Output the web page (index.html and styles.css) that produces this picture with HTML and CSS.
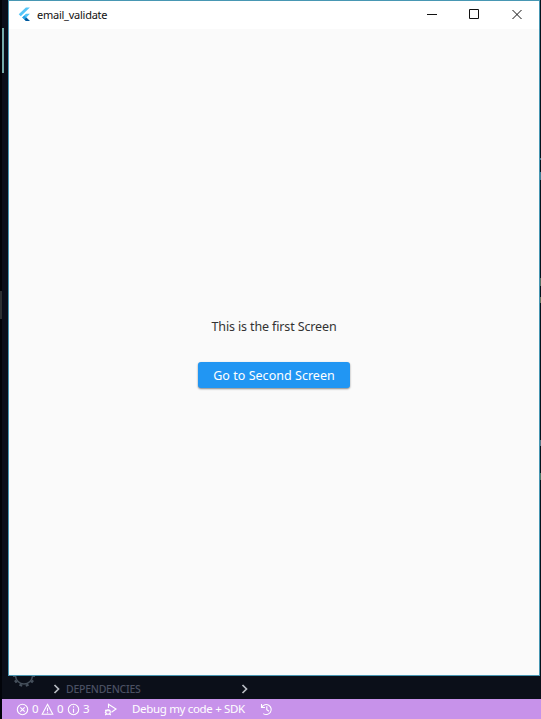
FILE: index.html
```html
<!DOCTYPE html>
<html lang="en">
<head>
<meta charset="utf-8">
<title>email_validate</title>
<link rel="stylesheet" href="styles.css">
</head>
<body>
<div class="desktop">
  <div class="workspace">
    <div class="gutter"><i class="active-mark"></i><i class="scroll-mark"></i></div>
    <main class="window">
      <header class="titlebar">
        <svg class="logo" width="14" height="16" viewBox="0 0 14 16">
          <path d="M8.500 .5h4.300L3 10 .8 7.800z" fill="#54c5f8"/>
          <path d="M8.500 7.200h4.300L8.900 11.100l3.900 4H8.500l-4-4z" fill="#54c5f8"/>
          <path d="M6.700 13.200l2.200-2.100 3.900 4H8.500z" fill="#01579b"/>
          <path d="M4.500 11.100l2.200-2.100 2.200 2.100-2.200 2.100z" fill="#29a3e8"/>
        </svg>
        <span class="title">email_validate</span>
        <div class="controls">
          <svg width="12" height="12" viewBox="0 0 12 12"><path d="M2 5.500h10"/></svg>
          <svg width="12" height="12" viewBox="0 0 12 12"><path d="M1.500 .5h9v9h-9z"/></svg>
          <svg width="12" height="12" viewBox="0 0 12 12"><path d="M1.500 1l9 9m0-9l-9 9"/></svg>
        </div>
      </header>
      <section class="screen">
        <p class="message">This is the first Screen</p>
        <button class="go">Go to Second Screen</button>
      </section>
    </main>
    <div class="edge"></div>
  </div>
  <div class="panel">
    <svg class="gear" width="26" height="24" viewBox="0 0 26 24"><circle cx="13" cy="11.500" r="8.500"/><path class="teeth" d="M15.800 20.100l.7 2.100M20.200 16.700l1.900 1.400M21.500 11.500h2.500M10.200 20.100l-.7 2.100M5.800 16.700l-1.900 1.400M4.500 11.500H2"/></svg>
    <svg class="chevron first" width="8" height="10" viewBox="0 0 8 10"><path d="M1.500 1l4 4-4 4"/></svg>
    <span class="deps">DEPENDENCIES</span>
    <svg class="chevron second" width="8" height="10" viewBox="0 0 8 10"><path d="M1.500 1l4 4-4 4"/></svg>
  </div>
  <footer class="status">
    <svg class="i-error" width="13" height="13" viewBox="0 0 13 13"><circle cx="6.500" cy="6.500" r="5.200"/><path d="M4.300 4.300l4.400 4.400m0-4.400L4.300 8.700"/></svg>
    <span class="n-error">0</span>
    <svg class="i-warn" width="13" height="13" viewBox="0 0 13 13"><path d="M6.500 1.300l5.300 10H1.200zM6.500 4.800v3.500m0 .9v1"/></svg>
    <span class="n-warn">0</span>
    <svg class="i-info" width="13" height="13" viewBox="0 0 13 13"><circle cx="6.500" cy="6.500" r="5.200"/><path d="M6.500 3.300v1.200m0 1.200v4"/></svg>
    <span class="n-info">3</span>
    <svg class="i-debug" width="13" height="13" viewBox="0 0 13 13"><path d="M4.500 5V1.200L12 6 7.500 9.200"/><circle cx="4" cy="9" r="2.300"/><path d="M2 7.800h4M1.200 7l1 .8M.8 9.500h1M1.200 12l1.300-1.200M6.800 12l-1.300-1.200"/></svg>
    <span class="debug">Debug my code + SDK</span>
    <svg class="i-history" width="13" height="13" viewBox="0 0 13 13"><path d="M1.800 4.200A5 5 0 1 1 3.300 10.600M1.500 1v3.500H5M6.800 3.300v3.400l2.200 1.500"/></svg>
  </footer>
</div>
</body>
</html>
```
FILE: styles.css
```css
* { box-sizing: border-box; }
body { margin: 0; background: #02050b; font-family: "Noto Sans", "Open Sans", sans-serif; }
svg { display: block; flex: none; fill: none; }
.desktop { width: 541px; height: 719px; display: grid; grid-template-rows: 676px 23px 20px; overflow: hidden; }
.workspace { display: grid; grid-template-columns: 8px 532px 1px; }
.gutter { background: linear-gradient(90deg, #010307 2px, #0a0e19 2px); padding-top: 28px; }
.gutter i { display: block; }
.active-mark { width: 2px; height: 45px; margin-left: 2px; background: #75aaa9; }
.scroll-mark { width: 2px; height: 28px; margin-top: 218px; background: #2c3032; }
.window { display: grid; grid-template-rows: 28px 1fr; background: #fafafa; border: 1px solid #4797b3; }
.titlebar { display: flex; align-items: center; background: #fff; padding-left: 9px; }
.logo { width: 13px; height: 15px; margin-top: -1px; }
.title { margin-left: 6px; width: 71px; font-size: 11px; line-height: 16px; letter-spacing: -.25px; color: #111; white-space: nowrap; }
.controls { margin-left: auto; display: flex; gap: 31px; padding-right: 16px; }
.controls svg { stroke: #111; stroke-width: 1; }
.screen { display: flex; flex-direction: column; align-items: center; padding-top: 289px; }
.message { margin: 0; font-size: 12.500px; line-height: 18px; letter-spacing: -.13px; color: #333; white-space: nowrap; }
.go { width: 152px; height: 26px; margin-top: 26px; padding: 1px 0 0; border: 0; border-radius: 3px; background: #2196f3; color: #fff; font: 400 12.500px/25px "Noto Sans", sans-serif; letter-spacing: .03px; white-space: nowrap; box-shadow: 0 1px 2px #0007; }
.edge { background: linear-gradient(#03121c 158px, #417b8d 158px, #417b8d 160px, #03121c 160px, #03121c 172px, #3c7c94 172px, #3c7c94 180px, #03121c 180px, #03121c 278px, #536d60 278px, #536d60 286px, #03121c 286px, #03121c 297px, #65745d 297px, #65745d 303px, #03121c 303px, #03121c 440px, #567584 440px, #567584 446px, #03121c 446px, #03121c 473px, #477462 473px, #477462 480px, #03121c 480px); }
.panel { display: flex; align-items: center; background: #0b0f19; border-left: 2px solid #02040a; overflow: hidden; }
.gear { margin: -23px 0 0 9px; stroke: #46505c; stroke-width: 1.500; }
.teeth { stroke-width: 3; }
.chevron { stroke: #b9bdc3; stroke-width: 1.700; margin-top: 3px; }
.first { margin-left: 16px; }
.deps { margin: 3px 0 0 5px; width: 77px; color: #4a5062; font-size: 10.500px; line-height: 14px; font-weight: 500; letter-spacing: -.25px; white-space: nowrap; }
.second { margin-left: 98px; }
.status { display: flex; align-items: center; background: #c792ea; border-left: 2px solid #02040a; padding-left: 14px; color: #fff; font-size: 11.500px; line-height: 20px; white-space: nowrap; }
.status svg { stroke: #fff; stroke-width: 1.100; }
.status span { height: 20px; }
.n-error, .n-warn, .n-info { width: 8px; }
.n-error, .n-info { margin-left: 3px; }
.n-warn { margin-left: 3px; }
.i-warn { margin-left: 1px; }
.i-info { margin-left: 2px; }
.i-debug { margin-left: 13px; }
.status .debug { margin-left: 15px; width: 114px; letter-spacing: -.33px; }
.i-history { margin-left: 14px; }
```
